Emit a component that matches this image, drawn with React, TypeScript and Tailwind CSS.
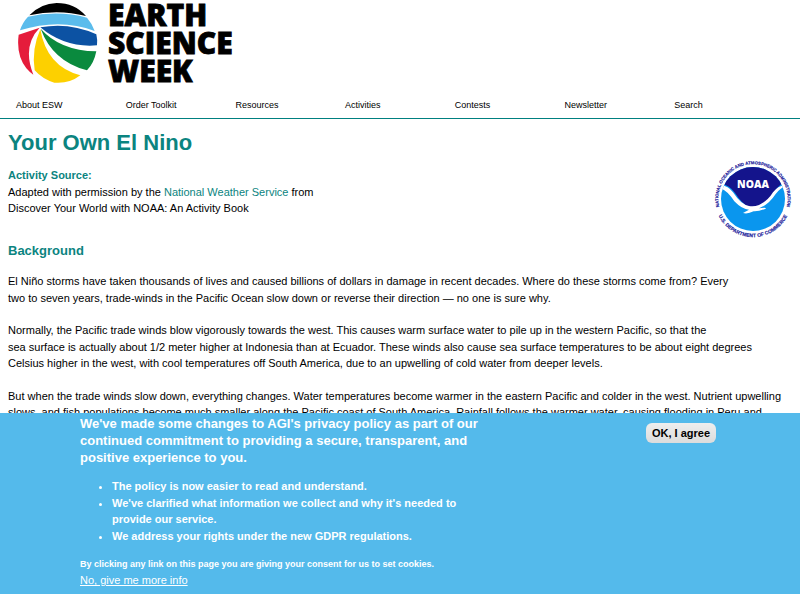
import React from "react";

const navItems = ["About ESW", "Order Toolkit", "Resources", "Activities", "Contests", "Newsletter", "Search"];

function EarthScienceWeekLogo() {
  return (
    <svg viewBox="0 0 220 90" className="h-[90px] w-[220px]" role="img" aria-label="Earth Science Week">
      <g transform="scale(0.3333) translate(-24 0)">
        <path d="M58 46 Q92 10 140 9 Q194 9 228 48 Q144 26 58 46Z" fill="#000" />
        <path d="M54 50 Q144 30 231 53 Q246 70 254 93 Q150 54 30 91 Q37 68 54 50Z" fill="#5bbcec" />
        <path d="M91 82 Q178 66 259 103 Q263 120 261 136 Q164 144 91 82Z" fill="#0c52a3" />
        <path d="M92 86 Q150 152 259 154 Q252 190 231 211 Q128 184 92 86Z" fill="#0a8a3e" />
        <path d="M91 88 Q110 200 211 226 Q178 252 133 248 Q98 238 74 211 Q64 148 91 88Z" fill="#fdd000" />
        <path d="M89 83 L26 104 Q18 166 49 205 Q60 218 70 224 Q36 138 89 83Z" fill="#e51c3b" />
      </g>
      <g fontFamily="'Open Sans', sans-serif" fontWeight="800" fontSize="30" fill="#000" stroke="#000" strokeWidth="0.8">
        <text x="90" y="26">EARTH</text>
        <text x="90" y="54">SCIENCE</text>
        <text x="90" y="82">WEEK</text>
      </g>
    </svg>
  );
}

function NoaaLogo() {
  return (
    <svg viewBox="37 22 240 240" className="size-20 shrink-0" role="img" aria-label="NOAA">
      <defs>
        <clipPath id="noaa-disc">
          <circle cx="160" cy="142" r="96" />
        </clipPath>
        <path id="noaa-top" d="M74 200 A104 104 0 1 1 246 200" />
        <path id="noaa-bottom" d="M54 186 A115 115 0 0 0 266 186" />
      </defs>
      <g clipPath="url(#noaa-disc)">
        <rect x="60" y="40" width="200" height="204" fill="#0a96ee" />
        <path d="M60 40H260V92Q242 94 224 120Q204 160 166 168L150 168Q128 158 106 124Q86 96 60 98Z" fill="#14148c" />
        <path
          d="M60 102Q82 98 100 122Q124 159 148 163Q162 166 178 160Q204 148 220 122Q238 97 262 102Q244 106 228 127Q208 158 178 170Q202 166 198 171Q178 180 162 179Q144 188 130 184L148 174Q128 174 104 149Q82 114 60 109Z"
          fill="#fff"
        />
      </g>
      <text x="160" y="110" textAnchor="middle" fontFamily="'Open Sans', sans-serif" fontWeight="800" fontSize="31" fill="#fff">
        NOAA
      </text>
      <g fontFamily="'Liberation Sans', Arial, sans-serif" fontWeight="700" fill="#20209a" stroke="#20209a" strokeWidth="0.5">
        <text fontSize="13">
          <textPath href="#noaa-top" startOffset="50%" textAnchor="middle">
            NATIONAL OCEANIC AND ATMOSPHERIC ADMINISTRATION
          </textPath>
        </text>
        <text fontSize="15">
          <textPath href="#noaa-bottom" startOffset="50%" textAnchor="middle">
            U.S. DEPARTMENT OF COMMERCE
          </textPath>
        </text>
      </g>
    </svg>
  );
}

function Header() {
  return (
    <header className="border-b border-[#008080]">
      <a href="#" className="block w-fit pl-[18px]">
        <EarthScienceWeekLogo />
      </a>
      <nav className="flex px-4 pb-1.5 pt-2">
        {navItems.map((item) => (
          <a key={item} href="#" className="w-1/7 text-[9px] leading-[14px] text-black">
            {item}
          </a>
        ))}
      </nav>
    </header>
  );
}

function PrivacyBanner() {
  return (
    <section aria-label="Privacy notice" className="fixed inset-x-0 bottom-0 bg-[#54baeb] font-bold text-white">
      <div className="mx-auto flex w-4/5 items-start justify-between pb-1.5 pt-0.5">
        <div className="max-w-[400px]">
          <h2 className="text-[13px] leading-[17px]">
            We've made some changes to AGI's privacy policy as part of our continued commitment to providing a secure,
            transparent, and positive experience to you.
          </h2>
          <ul className="my-3 list-disc pl-8 text-[11px] leading-normal">
            <li>The policy is now easier to read and understand.</li>
            <li>We've clarified what information we collect and why it's needed to provide our service.</li>
            <li>We address your rights under the new GDPR regulations.</li>
          </ul>
          <p className="text-[9px] leading-4">
            By clicking any link on this page you are giving your consent for us to set cookies.
          </p>
          <button type="button" className="block text-[11px] font-normal leading-4 underline">
            No, give me more info
          </button>
        </div>
        <button
          type="button"
          className="mr-1 mt-2 rounded-md bg-linear-to-b from-[#eeeeee] to-[#dcdcdc] px-1.5 text-[11px] leading-5 text-black"
        >
          OK, I agree
        </button>
      </div>
    </section>
  );
}

export default function App() {
  return (
    <div className="bg-white font-['Liberation_Sans',Arial,sans-serif] text-black">
      <Header />
      <main className="px-2 pt-2 text-[11px] leading-normal">
        <h1 className="text-[22px] font-bold leading-8 text-[#0b8480]">Your Own El Nino</h1>
        <div className="flex items-start justify-between">
          <div className="pt-2">
            <h2 className="font-bold text-[#0b8480]">Activity Source:</h2>
            <p>
              Adapted with permission by the{" "}
              <a href="#" className="text-[#0b8480]">
                National Weather Service
              </a>{" "}
              from
              <br />
              Discover Your World with NOAA: An Activity Book
            </p>
          </div>
          <NoaaLogo />
        </div>
        <h2 className="mb-3 mt-0.5 text-[13px] font-bold leading-5 text-[#0b8480]">Background</h2>
        <div className="space-y-4">
          <p>
            El Niño storms have taken thousands of lives and caused billions of dollars in damage in recent decades.
            Where do these storms come from? Every
            <br />
            two to seven years, trade-winds in the Pacific Ocean slow down or reverse their direction — no one is sure
            why.
          </p>
          <p>
            Normally, the Pacific trade winds blow vigorously towards the west. This causes warm surface water to pile
            up in the western Pacific, so that the
            <br />
            sea surface is actually about 1/2 meter higher at Indonesia than at Ecuador. These winds also cause sea
            surface temperatures to be about eight degrees
            <br />
            Celsius higher in the west, with cool temperatures off South America, due to an upwelling of cold water
            from deeper levels.
          </p>
          <p>
            But when the trade winds slow down, everything changes. Water temperatures become warmer in the eastern
            Pacific and colder in the west. Nutrient upwelling
            <br />
            slows, and fish populations become much smaller along the Pacific coast of South America. Rainfall follows
            the warmer water, causing flooding in Peru and
          </p>
        </div>
      </main>
      <PrivacyBanner />
    </div>
  );
}
